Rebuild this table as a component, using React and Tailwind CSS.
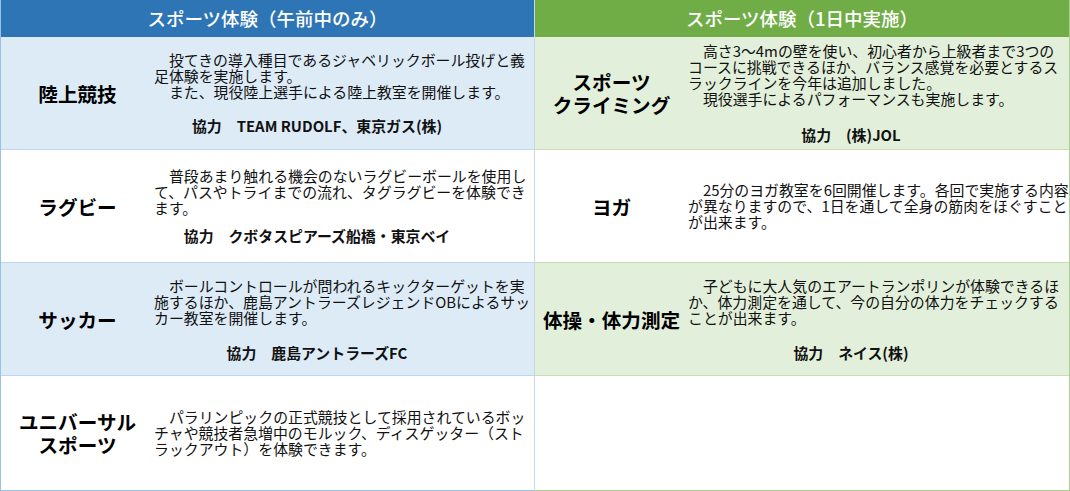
import React from "react";

const left = [
  {
    name: ["陸上競技"],
    lines: [
      "　投てきの導入種目であるジャベリックボール投げと義",
      "足体験を実施します。",
      "　また、現役陸上選手による陸上教室を開催します。",
    ],
    credit: "協力　TEAM RUDOLF、東京ガス(株)",
    gap: "mt-[18px]",
    shade: true,
  },
  {
    name: ["ラグビー"],
    lines: [
      "　普段あまり触れる機会のないラグビーボールを使用し",
      "て、パスやトライまでの流れ、タグラグビーを体験でき",
      "ます。",
    ],
    credit: "協力　クボタスピアーズ船橋・東京ベイ",
    gap: "mt-[12px]",
    shade: false,
  },
  {
    name: ["サッカー"],
    lines: [
      "　ボールコントロールが問われるキックターゲットを実",
      "施するほか、鹿島アントラーズレジェンドOBによるサッ",
      "カー教室を開催します。",
    ],
    credit: "協力　鹿島アントラーズFC",
    gap: "mt-[19px]",
    shade: true,
  },
  {
    name: ["ユニバーサル", "スポーツ"],
    lines: [
      "　パラリンピックの正式競技として採用されているボッ",
      "チャや競技者急増中のモルック、ディスゲッター（スト",
      "ラックアウト）を体験できます。",
    ],
    credit: null,
    gap: "",
    shade: false,
  },
];

const right = [
  {
    name: ["スポーツ", "クライミング"],
    lines: [
      "　高さ3～4mの壁を使い、初心者から上級者まで3つの",
      "コースに挑戦できるほか、バランス感覚を必要とするス",
      "ラックラインを今年は追加しました。",
      "　現役選手によるパフォーマンスも実施します。",
    ],
    credit: "協力　(株)JOL",
    gap: "mt-[20px]",
    shade: true,
  },
  {
    name: ["ヨガ"],
    lines: [
      "　25分のヨガ教室を6回開催します。各回で実施する内容",
      "が異なりますので、1日を通して全身の筋肉をほぐすこと",
      "が出来ます。",
    ],
    credit: null,
    gap: "",
    shade: false,
  },
  {
    name: ["体操・体力測定"],
    lines: [
      "　子どもに大人気のエアートランポリンが体験できるほ",
      "か、体力測定を通して、今の自分の体力をチェックする",
      "ことが出来ます。",
    ],
    credit: "協力　ネイス(株)",
    gap: "mt-[19px]",
    shade: true,
  },
  null,
];

function Row({ item, shadeClass, borderClass, lastBorderClass, last }) {
  const base = `flex items-center ${last ? `flex-1 ${lastBorderClass}` : `h-[113px] shrink-0 ${borderClass}`} border-b`;
  if (!item) return <div className={`${base} bg-white`} />;
  return (
    <div className={`${base} ${item.shade ? shadeClass : "bg-white"}`}>
      <div className="w-[153px] shrink-0 text-center text-[19.6px] font-bold leading-[23px] text-black">
        {item.name.map((n) => (
          <div key={n} className="whitespace-nowrap">{n}</div>
        ))}
      </div>
      <div className="flex flex-col text-[14.9px] leading-[16px] text-[#111]">
        {item.lines.map((l, i) => (
          <div key={i} className="whitespace-pre">{l}</div>
        ))}
        {item.credit && (
          <div className={`${item.gap} w-[326px] whitespace-pre text-center font-semibold`}>
            {item.credit}
          </div>
        )}
      </div>
    </div>
  );
}

function Column({ title, items, headerClass, shadeClass, borderClass, lastBorderClass, sideClass }) {
  return (
    <div className={`flex w-[535px] flex-col ${sideClass}`}>
      <div
        className={`flex h-[37px] shrink-0 items-center justify-center text-[18.5px] font-medium text-white ${headerClass}`}
      >
        {title}
      </div>
      {items.map((it, i) => (
        <Row
          key={i}
          item={it}
          shadeClass={shadeClass}
          borderClass={borderClass}
          lastBorderClass={lastBorderClass}
          last={i === items.length - 1}
        />
      ))}
    </div>
  );
}

export default function App() {
  return (
    <div
      className="flex h-[491px] w-[1070px] overflow-hidden bg-white"
      style={{ fontFamily: '"Noto Sans CJK JP", "Noto Sans", sans-serif' }}
    >
      <Column
        title="スポーツ体験（午前中のみ）"
        items={left}
        headerClass="bg-[#2e75b6]"
        shadeClass="bg-[#ddebf7]"
        borderClass="border-[#bdd7ee]"
        lastBorderClass="border-[#9bc2e6]"
        sideClass="border-l border-r border-l-[#9bc2e6] border-r-[#c9d6e3]"
      />
      <Column
        title="スポーツ体験（1日中実施）"
        items={right}
        headerClass="bg-[#70ad47]"
        shadeClass="bg-[#e2efda]"
        borderClass="border-[#c6e0b4]"
        lastBorderClass="border-[#a9d08e]"
        sideClass="border-r border-r-[#a9d08e]"
      />
    </div>
  );
}
